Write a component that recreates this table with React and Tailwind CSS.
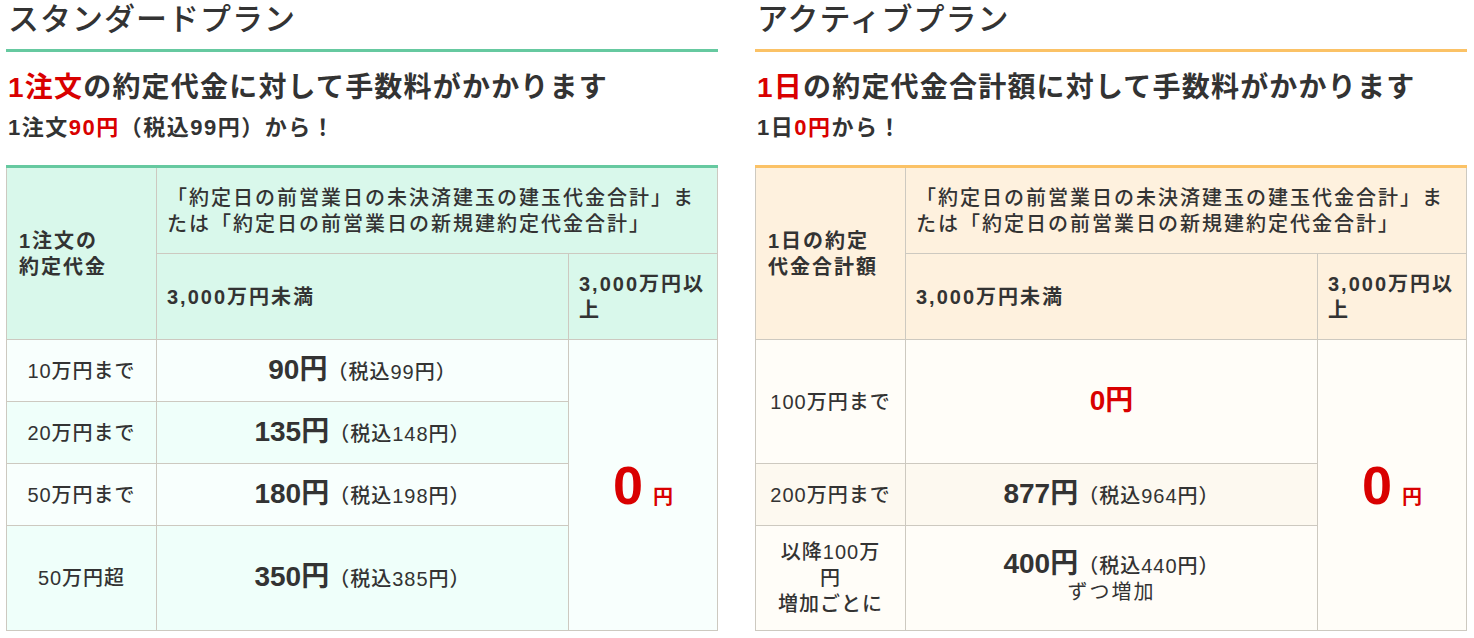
const font = { fontFamily: '"Liberation Sans", "Noto Sans CJK JP", sans-serif' };

function Price({ value, tax }) {
  return (
    <span>
      <span className="text-[28px] font-bold tracking-normal">{value}円</span>
      <span className="text-[20px] tracking-[1px]">（税込{tax}円）</span>
    </span>
  );
}

function Plan({ title, line, lead, sub, accent, headBg, rowA, rowB, cornerHead, rows }) {
  return (
    <div className="w-[712px]">
      <h2 className={`text-[31px] leading-[40px] tracking-[1px] font-medium pl-[2px] pb-[9px] border-b-[3px] ${line} text-[#333]`}>{title}</h2>
      <p className="mt-[18px] text-[28px] leading-[36px] font-bold tracking-[1.2px] pl-[2px] text-[#333]">{lead}</p>
      <p className="mt-[7px] text-[22px] leading-[30px] font-bold tracking-[1.5px] pl-[2px] text-[#333]">{sub}</p>
      <table className={`mt-[22px] w-full border-collapse border-t-[3px] ${accent} text-[#333] text-[20px] leading-[26px] tracking-[2px] font-medium`}>
        <colgroup>
          <col className="w-[150px]" />
          <col className="w-[412px]" />
          <col className="w-[149px]" />
        </colgroup>
        <tbody>
          <tr className="h-[87px]">
            <th rowSpan={2} className={`${headBg} border border-[#cdc9c0] border-t-0 text-left font-bold px-3 align-middle`}>{cornerHead}</th>
            <th colSpan={2} className={`${headBg} border border-[#cdc9c0] border-t-0 text-left font-medium px-[10px] align-middle`}>
              「約定日の前営業日の未決済建玉の建玉代金合計」ま<br />たは「約定日の前営業日の新規建約定代金合計」
            </th>
          </tr>
          <tr className="h-[86px]">
            <th className={`${headBg} border border-[#cdc9c0] text-left font-bold px-[10px]`}>3,000万円未満</th>
            <th className={`${headBg} border border-[#cdc9c0] text-left font-bold px-[10px]`}>3,000万円以<br />上</th>
          </tr>
          {rows.map((r, i) => (
            <tr key={i} style={{ height: r.h }}>
              <td className={`${i % 2 ? rowB : rowA} border border-[#cdc9c0] text-center px-1 tracking-[1px]`}>{r.label}</td>
              <td className={`${i % 2 ? rowB : rowA} border border-[#cdc9c0] text-center`}>{r.price}</td>
              {i === 0 && (
                <td rowSpan={rows.length} className={`${rowA} border border-[#cdc9c0] text-center text-[#d90000] font-bold tracking-normal`}>
                  <span className="text-[54px] leading-none">0</span>
                  <span className="text-[20px] ml-[10px]">円</span>
                </td>
              )}
            </tr>
          ))}
        </tbody>
      </table>
    </div>
  );
}

export default function App() {
  const red = "text-[#d90000]";
  return (
    <div className="bg-white min-h-[638px] pl-[6px] flex gap-[37px]" style={font}>
      <Plan
        title="スタンダードプラン"
        line="border-[#66c9a0]"
        accent="border-t-[#66c9a0]"
        headBg="bg-[#d9f8eb]"
        rowA="bg-[#f8fffd]"
        rowB="bg-[#effffa]"
        lead={<><span className={red}>1注文</span>の約定代金に対して手数料がかかります</>}
        sub={<>1注文<span className={red}>90円</span>（税込99円）から！</>}
        cornerHead={<>1注文の<br />約定代金</>}
        rows={[
          { h: 62, label: "10万円まで", price: <Price value="90" tax="99" /> },
          { h: 62, label: "20万円まで", price: <Price value="135" tax="148" /> },
          { h: 62, label: "50万円まで", price: <Price value="180" tax="198" /> },
          { h: 105, label: "50万円超", price: <Price value="350" tax="385" /> },
        ]}
      />
      <Plan
        title="アクティブプラン"
        line="border-[#fbc266]"
        accent="border-t-[#fbc266]"
        headBg="bg-[#fef1de]"
        rowA="bg-[#fffdf8]"
        rowB="bg-[#fdf9f0]"
        lead={<><span className={red}>1日</span>の約定代金合計額に対して手数料がかかります</>}
        sub={<>1日<span className={red}>0円</span>から！</>}
        cornerHead={<>1日の約定<br />代金合計額</>}
        rows={[
          { h: 124, label: "100万円まで", price: <span className={`text-[28px] font-bold tracking-normal ${red}`}>0円</span> },
          { h: 62, label: "200万円まで", price: <Price value="877" tax="964" /> },
          {
            h: 105,
            label: <>以降100万<br />円<br />増加ごとに</>,
            price: <><Price value="400" tax="440" /><br /><span className="font-normal">ずつ増加</span></>,
          },
        ]}
      />
    </div>
  );
}
